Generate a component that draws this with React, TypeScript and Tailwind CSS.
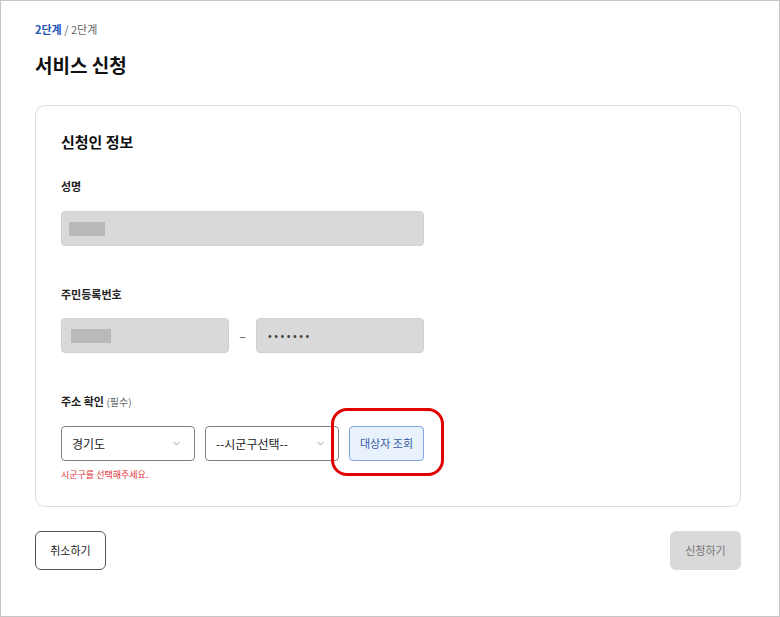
import { ChevronDown } from 'lucide-react';

const font = { fontFamily: '"Noto Sans CJK KR", "Noto Sans", sans-serif' };

function Masked({ w }: { w: string }) {
  return <span className={`block h-[14px] ${w} bg-[#b9b9b9]`} />;
}

function Select({ label }: { label: string }) {
  return (
    <div className="flex h-[35px] w-[134px] items-center justify-between rounded-[4px] border border-[#808080] bg-white pl-[10px] pr-[12px] text-[12px] text-[#222]">
      <span>{label}</span>
      <ChevronDown size={11} strokeWidth={1.6} className="text-[#777]" />
    </div>
  );
}

export default function App() {
  return (
    <div style={font} className="h-[617px] w-[780px] border border-[#c6c6c6] bg-white pl-[34px] pr-[38px] pt-[19px]">
      <p className="text-[11px] leading-[18px] text-[#666]">
        <span className="font-bold text-[#2458b8]">2단계</span> / 2단계
      </p>
      <h1 className="mt-[13px] text-[19px] font-bold leading-[28px] text-[#111]">서비스 신청</h1>

      <section className="mt-[26px] rounded-[10px] border border-[#dcdcdc] px-[25px] pb-[24px] pt-[24px]">
        <h2 className="text-[15px] font-bold leading-[24px] text-[#111]">신청인 정보</h2>

        <p className="mt-[23px] text-[11px] font-bold leading-[18px] text-[#222]">성명</p>
        <div className="mt-[16px] flex h-[35px] w-[363px] items-center rounded-[4px] border border-[#d0d0d0] bg-[#d9d9d9] pl-[7px]">
          <Masked w="w-[36px]" />
        </div>

        <p className="mt-[39px] text-[11px] font-bold leading-[18px] text-[#222]">주민등록번호</p>
        <div className="mt-[15px] flex w-[363px] items-center justify-between">
          <div className="flex h-[35px] w-[168px] items-center rounded-[4px] border border-[#d0d0d0] bg-[#d9d9d9] pl-[9px]">
            <Masked w="w-[40px]" />
          </div>
          <span className="text-[12px] text-[#444]">–</span>
          <div className="flex h-[35px] w-[168px] items-center rounded-[4px] border border-[#d0d0d0] bg-[#d9d9d9] pl-[11px] text-[11px] tracking-[2.5px] text-[#444]">
            •••••••
          </div>
        </div>

        <p className="mt-[39px] text-[11px] font-bold leading-[18px] text-[#222]">
          주소 확인 <span className="text-[10px] font-normal text-[#666]">(필수)</span>
        </p>
        <div className="mt-[15px] flex items-center gap-[10px]">
          <Select label="경기도" />
          <Select label="--시군구선택--" />
          <div className="relative">
            <button className="h-[35px] w-[75px] rounded-[4px] border border-[#7fa6df] bg-[#e9f1fd] text-[11px] text-[#33599f]">
              대상자 조회
            </button>
            <span className="pointer-events-none absolute -left-[18px] -top-[18px] h-[68px] w-[113px] rounded-[16px] border-[3px] border-[#e00000]" />
          </div>
        </div>
        <p className="mt-[7px] text-[9px] leading-[14px] text-[#e0303a]">시군구를 선택해주세요.</p>
      </section>

      <div className="mt-[24px] flex justify-between">
        <button className="h-[39px] w-[71px] rounded-[6px] border border-[#555] bg-white text-[11px] text-[#222]">
          취소하기
        </button>
        <button className="h-[39px] w-[71px] rounded-[6px] bg-[#d9d9d9] text-[11px] text-[#777]">
          신청하기
        </button>
      </div>
    </div>
  );
}
